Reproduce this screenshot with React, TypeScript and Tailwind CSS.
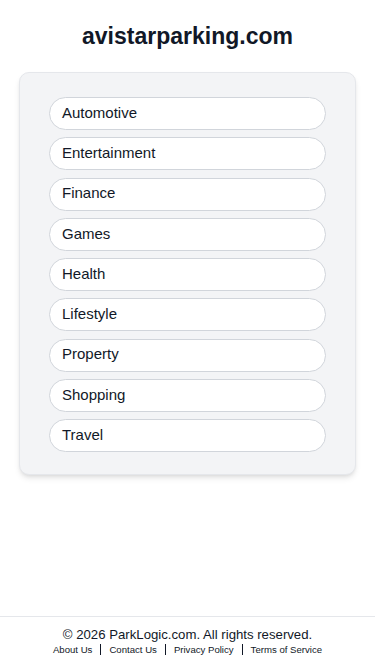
import React from "react";

const categories = [
  "Automotive",
  "Entertainment",
  "Finance",
  "Games",
  "Health",
  "Lifestyle",
  "Property",
  "Shopping",
  "Travel",
];

const links = ["About Us", "Contact Us", "Privacy Policy", "Terms of Service"];

export default function App() {
  return (
    <div className="min-h-[667px] flex flex-col bg-white font-['Liberation_Sans',Arial,sans-serif]">
      <main className="flex-1">
        <h1 className="text-center text-[23px] font-bold text-[#111827] pt-[22px] pb-[22px] leading-[28px]">
          avistarparking.com
        </h1>
        <div className="mx-[19px] rounded-[10px] border border-[#e5e7eb] bg-[#f3f4f6] shadow-md px-[29px] pt-[24px] pb-[22px]">
          <div className="flex flex-col gap-[7.25px]">
            {categories.map((c) => (
              <button
                key={c}
                className="h-[33px] w-full rounded-full border border-[#d1d5db] bg-white px-[12px] pb-[1px] text-left text-[15px] text-[#111827]"
              >
                {c}
              </button>
            ))}
          </div>
        </div>
      </main>
      <footer className="border-t border-[#e5e7eb] pt-[9px] pb-[11px] text-center">
        <p className="text-[13.2px] leading-[17px] text-[#111827]">
          © 2026 ParkLogic.com. All rights reserved.
        </p>
        <div className="flex justify-center items-center text-[9.6px] leading-[13px] text-[#111827]">
          {links.map((l, i) => (
            <React.Fragment key={l}>
              {i > 0 && <span className="mx-[8px] h-[11px] w-px bg-[#111827]" />}
              <a href="#">{l}</a>
            </React.Fragment>
          ))}
        </div>
      </footer>
    </div>
  );
}
